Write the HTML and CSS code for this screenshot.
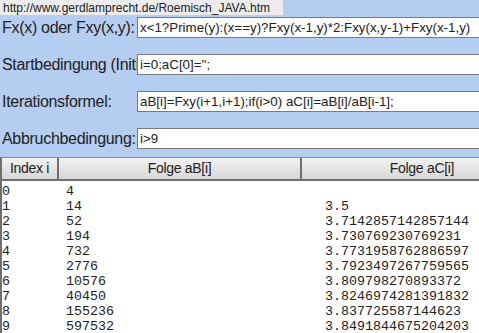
FILE: index.html
```html
<!DOCTYPE html>
<html lang="de">
<head>
    <meta charset="UTF-8">
    <meta name="viewport" content="width=device-width, initial-scale=1.0">
    <title>Roemisch JAVA</title>
    <link rel="stylesheet" href="styles.css">
</head>
<body>
    <div class="status">http://www.gerdlamprecht.de/Roemisch_JAVA.htm</div>

    <form class="calc">
        <div class="row">
            <label for="fx">Fx(x) oder Fxy(x,y):</label>
            <input type="text" id="fx" value="x&lt;1?Prime(y):(x==y)?Fxy(x-1,y)*2:Fxy(x,y-1)+Fxy(x-1,y)">
        </div>
        <div class="row">
            <label for="init">Startbedingung (Initialisierung):</label>
            <input type="text" id="init" value="i=0;aC[0]='';">
        </div>
        <div class="row">
            <label for="iter">Iterationsformel:</label>
            <input type="text" id="iter" value="aB[i]=Fxy(i+1,i+1);if(i&gt;0) aC[i]=aB[i]/aB[i-1];">
        </div>
        <div class="row">
            <label for="stop">Abbruchbedingung:</label>
            <input type="text" id="stop" value="i&gt;9">
        </div>
    </form>

    <div class="result">
        <div class="head">
            <div class="cell col-i">Index i</div>
            <div class="cell col-b">Folge aB[i]</div>
            <div class="cell col-c">Folge aC[i]</div>
        </div>
        <div class="rows">
            <div class="line"><span>0</span><span>4</span><span></span></div>
            <div class="line"><span>1</span><span>14</span><span>3.5</span></div>
            <div class="line"><span>2</span><span>52</span><span>3.7142857142857144</span></div>
            <div class="line"><span>3</span><span>194</span><span>3.730769230769231</span></div>
            <div class="line"><span>4</span><span>732</span><span>3.7731958762886597</span></div>
            <div class="line"><span>5</span><span>2776</span><span>3.7923497267759565</span></div>
            <div class="line"><span>6</span><span>10576</span><span>3.809798270893372</span></div>
            <div class="line"><span>7</span><span>40450</span><span>3.8246974281391832</span></div>
            <div class="line"><span>8</span><span>155236</span><span>3.837725587144623</span></div>
            <div class="line"><span>9</span><span>597532</span><span>3.8491844675204203</span></div>
        </div>
    </div>
</body>
</html>
```

FILE: styles.css
```css
body {
    margin: 0;
    padding: 0;
    background-color: #b4cdf0;
    font-family: 'Liberation Sans', Arial, sans-serif;
    color: #222;
    overflow: hidden;
    position: relative;
}

.status {
    position: absolute;
    top: 0;
    left: 0;
    width: 280px;
    height: 15px;
    padding-left: 3px;
    background-color: #ececec;
    font-size: 12px;
    line-height: 17px;
    color: #222;
    white-space: nowrap;
    z-index: 2;
}

.calc {
    padding-top: 17px;
}

.row {
    display: flex;
    align-items: center;
    height: 21px;
    margin-bottom: 16px;
}

.row:last-child {
    margin-bottom: 0;
}

.row label {
    flex: none;
    width: 135px;
    padding-left: 2px;
    overflow: hidden;
    white-space: nowrap;
    font-size: 16px;
    letter-spacing: -0.3px;
}

.row input {
    flex: none;
    box-sizing: border-box;
    width: 380px;
    height: 21px;
    margin: 0;
    padding: 0 2px;
    border: 1px solid #7a7a7a;
    background: #fff;
    font-family: 'Liberation Sans', Arial, sans-serif;
    font-size: 13.33px;
    color: #222;
    outline: none;
}

.result {
    margin-top: 8px;
    width: 560px;
    background-color: #fff;
}

.head {
    display: grid;
    grid-template-columns: 57px 243px 240px;
    border-top: 1px solid #8c8c8c;
    border-bottom: 2px solid #6f6f6f;
    border-left: 2px solid #6f6f6f;
    background: linear-gradient(#f2f2f2, #d7d7d7);
}

.cell {
    height: 21px;
    line-height: 21px;
    text-align: center;
    font-size: 14px;
    letter-spacing: -0.3px;
    color: #222;
}

.col-i,
.col-b {
    border-right: 2px solid #6f6f6f;
}

.rows {
    border-left: 2px solid #6f6f6f;
    padding-top: 3px;
    height: 160px;
    font-family: 'Liberation Mono', 'Courier New', monospace;
    font-size: 13.33px;
    line-height: 15px;
    color: #222;
}

.line {
    display: grid;
    grid-template-columns: 64px 259px auto;
    white-space: pre;
}
```
